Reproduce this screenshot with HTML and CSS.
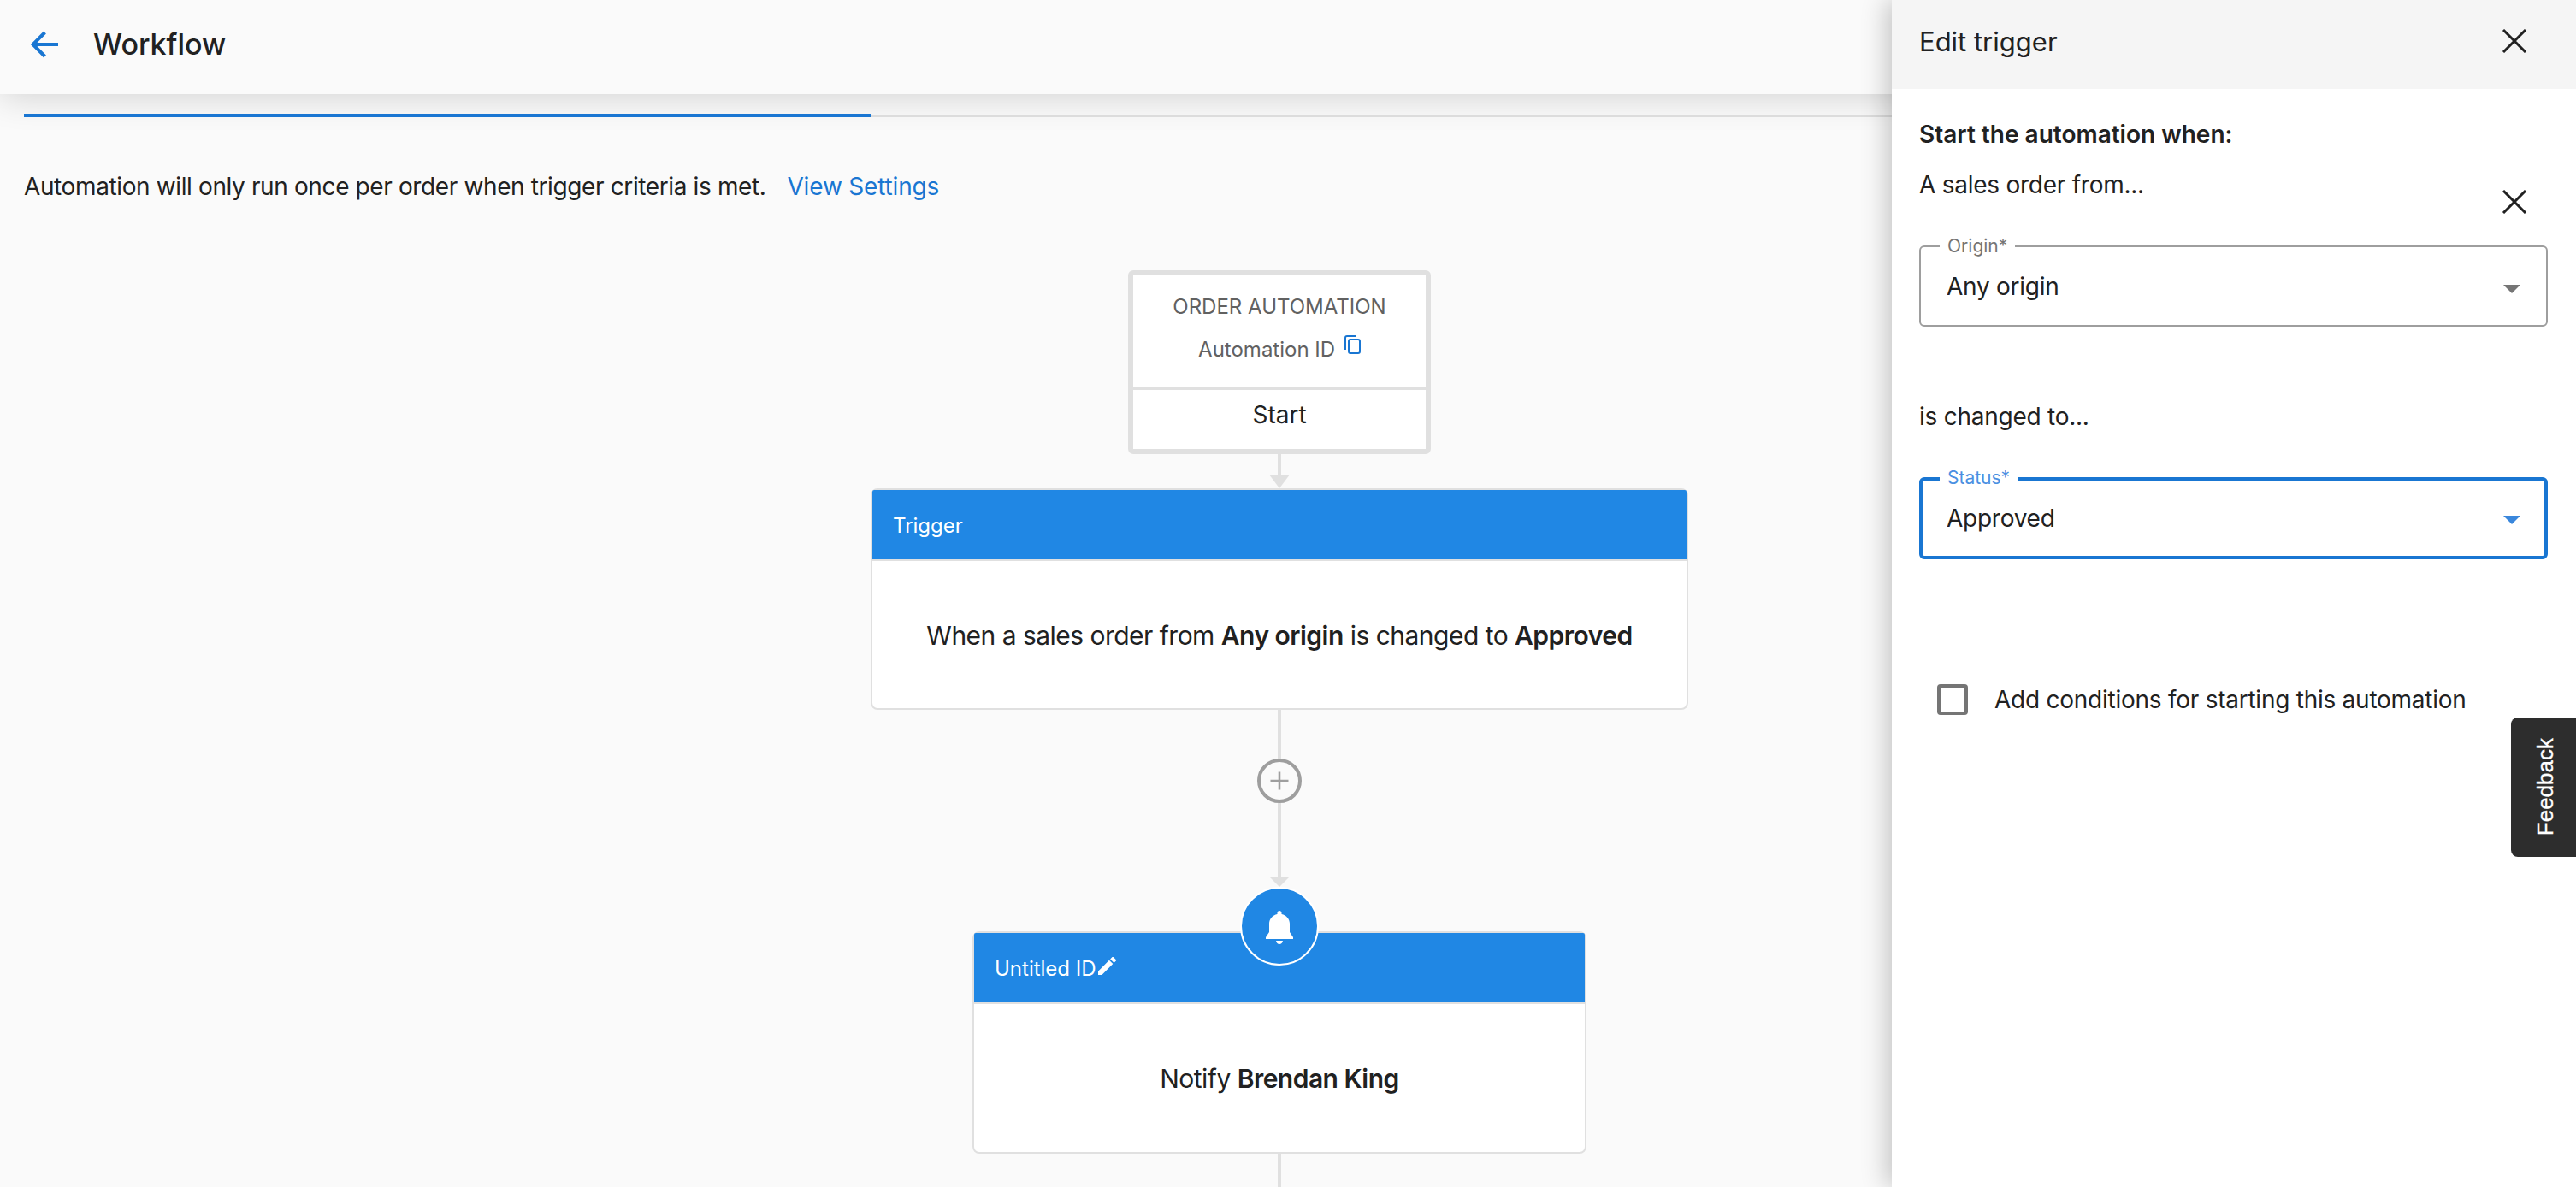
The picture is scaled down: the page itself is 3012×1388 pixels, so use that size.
FILE: index.html
```html
<!DOCTYPE html>
<html lang="en">
<head>
<meta charset="utf-8">
<title>Workflow</title>
<link rel="stylesheet" href="styles.css">
</head>
<body>
<div class="page">
  <header class="appbar">
    <svg class="back" viewBox="0 0 34 32"><path d="M32 16H3M16.500 2 2.500 16l14 14" fill="none" stroke="#1976d2" stroke-width="4"/></svg>
    <h1 class="title">Workflow</h1>
  </header>
  <div class="tabs"><div class="tab-active"></div></div>
  <p class="notice"><span>Automation will only run once per order when trigger criteria is met.</span><a class="link">View Settings</a></p>
  <main class="canvas">
    <section class="start">
      <div class="start-top">
        <div class="start-kicker">ORDER AUTOMATION</div>
        <div class="start-id">Automation ID
          <svg class="copy" viewBox="0 0 19 22"><path d="M14 1H3a2 2 0 0 0-2 2v14" fill="none" stroke="#1976d2" stroke-width="2"/><rect x="5" y="5" width="13" height="16" rx="2" fill="none" stroke="#1976d2" stroke-width="2"/></svg>
        </div>
      </div>
      <div class="start-bottom">Start</div>
    </section>
    <div class="line l-start"></div>
    <div class="arrow a-start"></div>
    <section class="card trigger">
      <div class="card-head">Trigger</div>
      <div class="card-body">When a sales order from&nbsp;<b>Any origin</b>&nbsp;is changed to&nbsp;<b>Approved</b></div>
    </section>
    <div class="line l-plus"></div>
    <div class="plus"><svg viewBox="0 0 24 24"><path d="M12 3v18M3 12h18" stroke="#9e9e9e" stroke-width="2.2" fill="none"/></svg></div>
    <div class="line l-down"></div>
    <div class="arrow a-down"></div>
    <section class="card notify">
      <div class="badge">
        <svg viewBox="0 0 32 39"><path d="M16 0c-1.500 0-2.500 1-2.500 2.500V4C8 5 4 10 4 15v10L0 31v2h32v-2l-4-6V15c0-5-4-10-9.500-11V2.500C18.500 1 17.500 0 16 0zM12 35h8c-.5 2.500-2 4-4 4s-3.500-1.500-4-4z" fill="#fff"/></svg>
      </div>
      <div class="card-head">Untitled ID
        <svg class="pencil" viewBox="3 3 18 18"><path d="M3 17.250V21h3.750L17.810 9.940l-3.750-3.750L3 17.250zM20.710 7.040c.39-.39.39-1.020 0-1.410l-2.340-2.340c-.39-.39-1.020-.39-1.410 0l-1.830 1.830 3.750 3.750 1.830-1.830z" fill="#fff"/></svg>
      </div>
      <div class="card-body">Notify&nbsp;<b>Brendan King</b></div>
    </section>
    <div class="line l-end"></div>
  </main>
</div>

<aside class="drawer">
  <div class="drawer-head">
    <span>Edit trigger</span>
    <svg class="close" viewBox="0 0 30 28"><path d="M2 1l26 26M28 1 2 27" stroke="#212121" stroke-width="3" fill="none"/></svg>
  </div>
  <div class="drawer-body">
    <div class="lead">Start the automation when:</div>
    <div class="row-from">
      <span>A sales order from...</span>
      <svg class="close" viewBox="0 0 30 28"><path d="M2 1l26 26M28 1 2 27" stroke="#212121" stroke-width="3" fill="none"/></svg>
    </div>
    <div class="field">
      <span class="field-label">Origin*</span>
      <span>Any origin</span>
      <i class="caret"></i>
    </div>
    <div class="changed">is changed to...</div>
    <div class="field focus">
      <span class="field-label">Status*</span>
      <span>Approved</span>
      <i class="caret"></i>
    </div>
    <label class="check"><i class="box"></i><span>Add conditions for starting this automation</span></label>
  </div>
</aside>
<div class="feedback"><span>Feedback</span></div>
</body>
</html>
```
FILE: styles.css
```css
* { box-sizing: border-box; }
html, body { margin: 0; height: 1388px; overflow: hidden; background: #fafafa; }
body { font-family: Inter, "Liberation Sans", sans-serif; color: #212121; position: relative; }
.page { width: 3012px; height: 1388px; overflow: hidden; }

.appbar { height: 110px; display: flex; align-items: center; padding: 0 0 6px 36px; background: #fafafa; box-shadow: 0 4px 40px rgba(0,0,0,.16); position: relative; }
.back { width: 34px; height: 32px; flex: none; }
.title { margin: 0 0 0 39px; font-size: 34px; font-weight: 500; line-height: 40px; }

.tabs { margin: 25px 0 0 28px; height: 2px; background: #dcdcdc; position: relative; }
.tab-active { position: absolute; left: 0; top: -2px; width: 991px; height: 4px; background: #1976d2; }

.notice { margin: 61px 0 0 28px; font-size: 28px; line-height: 40px; display: flex; letter-spacing: -.38px; }
.link { color: #1976d2; margin-left: 25px; letter-spacing: -.17px; }

.canvas { width: 2992px; margin-top: 78px; display: flex; flex-direction: column; align-items: center; }

.start { width: 354px; height: 215px; border: 6px solid #e0e0e0; border-radius: 6px; background: #fff; }
.start-top { height: 134px; border-bottom: 4px solid #e0e0e0; text-align: center; color: #616161; font-size: 24px; padding-top: 22px; }
.start-kicker { line-height: 30px; }
.start-id { line-height: 30px; margin-top: 18px; }
.copy { width: 19px; height: 22px; vertical-align: 3px; margin-left: 4px; }
.start-bottom { text-align: center; font-size: 28px; line-height: 36px; padding-top: 11px; color: #212121; }

.line { width: 4px; background: #e0e0e0; flex: none; }
.l-start { height: 24px; }
.arrow { width: 0; height: 0; border-left: 12px solid transparent; border-right: 12px solid transparent; border-top: 16px solid #e0e0e0; flex: none; }
.a-start { margin-top: 0; }
.l-plus { height: 57px; }
.plus { width: 52px; height: 52px; border: 4px solid #9e9e9e; border-radius: 50%; display: flex; align-items: center; justify-content: center; flex: none; }
.plus svg { width: 28px; height: 28px; }
.l-down { height: 86px; }
.a-down { border-top-width: 12px; }
.l-end { height: 60px; }

.card { background: #fff; border: 2px solid #e0e0e0; border-radius: 8px; position: relative; flex: none; }
.trigger { width: 956px; height: 259px; }
.notify { width: 718px; height: 260px; margin-top: 52px; }
.card-head { height: 81px; padding: 2px 0 0 24px; background: #2087e4; color: #fff; font-size: 24px; line-height: 30px; display: flex; align-items: center; border-radius: 2px 2px 0 0; box-shadow: 0 2px 0 #e0e0e0; }
.pencil { width: 21px; height: 21px; margin-left: 2px; margin-top: -7px; }
.card-body { height: 174px; margin-top: 2px; display: flex; align-items: center; justify-content: center; font-size: 30px; white-space: nowrap; letter-spacing: -.52px; }
.card-body b { font-weight: 600; }

.badge { position: absolute; left: 311px; top: -54px; width: 92px; height: 92px; border-radius: 50%; background: #2087e4; border: 2px solid #fff; z-index: 1; display: flex; align-items: center; justify-content: center; }
.badge svg { width: 32px; height: 39px; margin-top: 2px; }

.drawer { position: absolute; left: 2212px; top: 0; width: 800px; height: 1388px; background: #fff; box-shadow: -6px 0 28px rgba(0,0,0,.22); }
.drawer-head { height: 104px; background: #f5f5f5; display: flex; align-items: center; justify-content: space-between; padding: 0 57px 8px 32px; font-size: 31px; }
.close { width: 30px; height: 28px; flex: none; }
.drawer-body { padding: 0 33px 0 32px; font-size: 28px; letter-spacing: -.25px; }
.lead { font-weight: 600; line-height: 36px; margin-top: 35px; letter-spacing: 0; }
.row-from { display: flex; justify-content: space-between; align-items: flex-start; padding-right: 24px; line-height: 36px; margin-top: 23px; }
.row-from .close { margin: 24px 0 -16px; }
.field { height: 95px; margin-top: 36px; border: 2px solid #9e9e9e; border-radius: 6px; display: flex; align-items: center; padding: 0 30px; position: relative; line-height: 36px; }
.row-from + .field { margin-top: 53px; }
.field-label { position: absolute; left: 22px; top: -14px; padding: 0 9px; background: #fff; font-size: 21px; line-height: 26px; color: #757575; letter-spacing: 0; }
.caret { position: absolute; right: 30px; top: 44px; width: 0; height: 0; border-left: 10px solid transparent; border-right: 10px solid transparent; border-top: 10px solid #757575; }
.changed { line-height: 36px; margin-top: 87px; }
.focus { height: 96px; margin-top: 53px; border: 4px solid #1976d2; padding: 0 28px; }
.focus .field-label { color: #4a90e2; left: 20px; top: -16px; }
.focus .caret { border-top-color: #3a87dc; right: 28px; top: 41px; }
.check { display: flex; align-items: center; margin: 146px 0 0 21px; }
.box { width: 36px; height: 36px; border: 4px solid #757575; border-radius: 4px; flex: none; margin-right: 31px; }

.feedback { position: absolute; right: 0; top: 839px; width: 76px; height: 163px; padding-left: 4px; background: #2d2d2d; border-radius: 8px 0 0 8px; display: flex; align-items: center; justify-content: center; }
.feedback span { writing-mode: vertical-rl; transform: rotate(180deg); font-family: "Liberation Sans", Arial, sans-serif; font-size: 26px; color: #fff; -webkit-text-stroke: .3px #fff; }
```
